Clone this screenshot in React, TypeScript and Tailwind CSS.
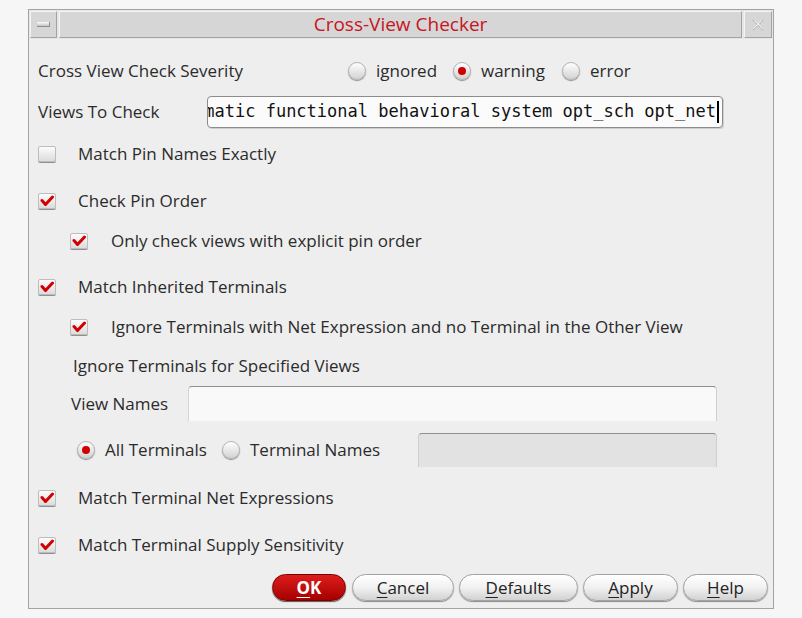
import React from "react";

function Check({ checked }: { checked: boolean }) {
  return (
    <div className="w-[18px] h-[16px] shrink-0 rounded-[2px] border border-[#bdbdbd] bg-linear-to-b from-[#fcfcfc] to-[#dcdcdc] shadow-[0_1px_0_#8f8f8f] flex items-center justify-center">
      {checked && (
        <svg width="14" height="12" viewBox="0 0 14 12">
          <path d="M2 5.5 L5.5 9.5 L12.5 2" stroke="#d40000" strokeWidth="3" fill="none" strokeLinecap="round" strokeLinejoin="round" />
        </svg>
      )}
    </div>
  );
}

function RadioDot({ on }: { on: boolean }) {
  return (
    <div className="w-[18px] h-[18px] shrink-0 rounded-full border border-[#b4b4b4] bg-linear-to-b from-[#ffffff] to-[#d2d2d2] shadow-[0_1px_1px_#8a8a8a] flex items-center justify-center">
      {on && <div className="w-[8px] h-[8px] rounded-full bg-[#d00000]" />}
    </div>
  );
}

function RadioOpt({ label, on, w }: { label: string; on: boolean; w: string }) {
  return (
    <div className={`flex items-center gap-[10px] ${w}`}>
      <RadioDot on={on} />
      <span>{label}</span>
    </div>
  );
}

function CheckRow({ label, checked, level, mt }: { label: string; checked: boolean; level: number; mt: string }) {
  return (
    <div className={`${mt} h-[30px] flex items-center ${level === 2 ? "pl-[32px] gap-[23px]" : "gap-[22px]"}`}>
      <Check checked={checked} />
      <span>{label}</span>
    </div>
  );
}

function Btn({ first, rest, w, primary }: { first: string; rest: string; w: string; primary?: boolean }) {
  return (
    <div
      className={`${w} h-[27px] rounded-full flex items-center justify-center ${
        primary
          ? "bg-linear-to-b from-[#de1c1c] to-[#a50000] border border-[#7a0000] text-white font-bold shadow-[0_1px_1px_#555]"
          : "bg-linear-to-b from-[#ffffff] via-[#f1f1f1] to-[#d2d2d2] border border-[#a2a2a2] text-[#222] shadow-[0_1px_1px_#8a8a8a]"
      }`}
    >
      <span>
        <span className="underline underline-offset-[3px]">{first}</span>
        {rest}
      </span>
    </div>
  );
}

export default function App() {
  return (
    <div className="w-[802px] h-[618px] bg-[#f6f6f6] pt-[9px] pl-[28px] font-['Open_Sans',sans-serif]">
      <div className="w-[746px] h-[600px] border border-[#a3a3a3] bg-[#eeeeee] flex flex-col">
        {/* title bar */}
        <div className="h-[29px] flex gap-[2px] p-[1px] bg-[#e6e6e6]">
          <div className="w-[27px] h-full bg-[#d6d6d6] border border-t-[#f4f4f4] border-l-[#f4f4f4] border-r-[#a2a2a2] border-b-[#a2a2a2] flex items-center justify-center">
            <div className="w-[13px] h-[5px] bg-linear-to-b from-[#fbfbfb] to-[#c4c4c4] border-b border-r border-[#8e8e8e]" />
          </div>
          <div className="flex-1 h-full bg-[#d6d6d6] border border-t-[#f4f4f4] border-l-[#f4f4f4] border-r-[#a2a2a2] border-b-[#a2a2a2] flex items-center justify-center text-[19px] leading-none text-[#c8141e]">
            Cross-View Checker
          </div>
          <div className="w-[28px] h-full bg-[#d6d6d6] border border-t-[#f4f4f4] border-l-[#f4f4f4] border-r-[#a2a2a2] border-b-[#a2a2a2] flex items-center justify-center">
            <svg width="16" height="16" viewBox="0 0 16 16">
              <path d="M3 3 Q6 6 8 8 Q10 10 13 13 M13 3 Q10 6 8 8 Q6 10 3 13" stroke="#b9b9b9" strokeWidth="1.5" strokeDasharray="2 1" fill="none" />
              <path d="M4 3 L13 12 M12 3 L3 12" stroke="#f7f7f7" strokeWidth="0.8" fill="none" />
            </svg>
          </div>
        </div>

        {/* body */}
        <div className="flex flex-col pl-[9px] text-[17px] text-[#2b2b2b]">
          <div className="mt-[17px] h-[30px] flex items-center">
            <div className="w-[310px]">Cross View Check Severity</div>
            <RadioOpt label="ignored" on={false} w="w-[105px]" />
            <RadioOpt label="warning" on={true} w="w-[109px]" />
            <RadioOpt label="error" on={false} w="w-[80px]" />
          </div>

          <div className="mt-[10px] h-[32px] flex items-center">
            <div className="w-[169px]">Views To Check</div>
            <div className="w-[516px] h-[32px] rounded-[4px] border border-[#8c8c8c] bg-[#fbfbfb] shadow-[1px_1px_0_#cfcfcf] overflow-hidden flex items-center justify-end pr-[3px] font-['DejaVu_Sans_Mono',monospace] text-[17px] text-[#111] whitespace-nowrap">
              <span className="shrink-0">schematic functional behavioral system opt_sch opt_net</span>
              <span className="shrink-0 w-[2px] h-[22px] bg-black ml-[1px]" />
            </div>
          </div>

          <CheckRow mt="mt-[11px]" level={1} checked={false} label="Match Pin Names Exactly" />
          <CheckRow mt="mt-[17px]" level={1} checked={true} label="Check Pin Order" />
          <CheckRow mt="mt-[10px]" level={2} checked={true} label="Only check views with explicit pin order" />
          <CheckRow mt="mt-[16px]" level={1} checked={true} label="Match Inherited Terminals" />
          <CheckRow mt="mt-[10px]" level={2} checked={true} label="Ignore Terminals with Net Expression and no Terminal in the Other View" />

          <div className="mt-[9px] h-[30px] flex items-center pl-[35px]">Ignore Terminals for Specified Views</div>

          <div className="mt-[5px] h-[35px] flex items-center pl-[33px]">
            <div className="w-[117px]">View Names</div>
            <div className="w-[529px] h-[35px] rounded-t-[4px] border-t border-t-[#8e8e8e] border-l border-l-[#d4d4d4] border-r border-r-[#cfcfcf] bg-[#f9f9f9]" />
          </div>

          <div className="mt-[12px] h-[34px] flex items-center pl-[39px]">
            <RadioOpt label="All Terminals" on={true} w="w-[145px]" />
            <RadioOpt label="Terminal Names" on={false} w="w-[196px]" />
            <div className="w-[299px] h-[34px] rounded-t-[4px] border-t border-t-[#8e8e8e] border-l border-l-[#cfcfcf] border-r border-r-[#cfcfcf] bg-[#e2e2e2]" />
          </div>

          <CheckRow mt="mt-[16px]" level={1} checked={true} label="Match Terminal Net Expressions" />
          <CheckRow mt="mt-[17px]" level={1} checked={true} label="Match Terminal Supply Sensitivity" />

          <div className="mt-[14px] h-[27px] flex justify-end gap-[5px] pr-[5px]">
            <div className="mr-[1px]">
              <Btn primary first="O" rest="K" w="w-[74px]" />
            </div>
            <Btn first="C" rest="ancel" w="w-[102px]" />
            <Btn first="D" rest="efaults" w="w-[119px]" />
            <Btn first="A" rest="pply" w="w-[95px]" />
            <Btn first="H" rest="elp" w="w-[85px]" />
          </div>
        </div>
      </div>
    </div>
  );
}
